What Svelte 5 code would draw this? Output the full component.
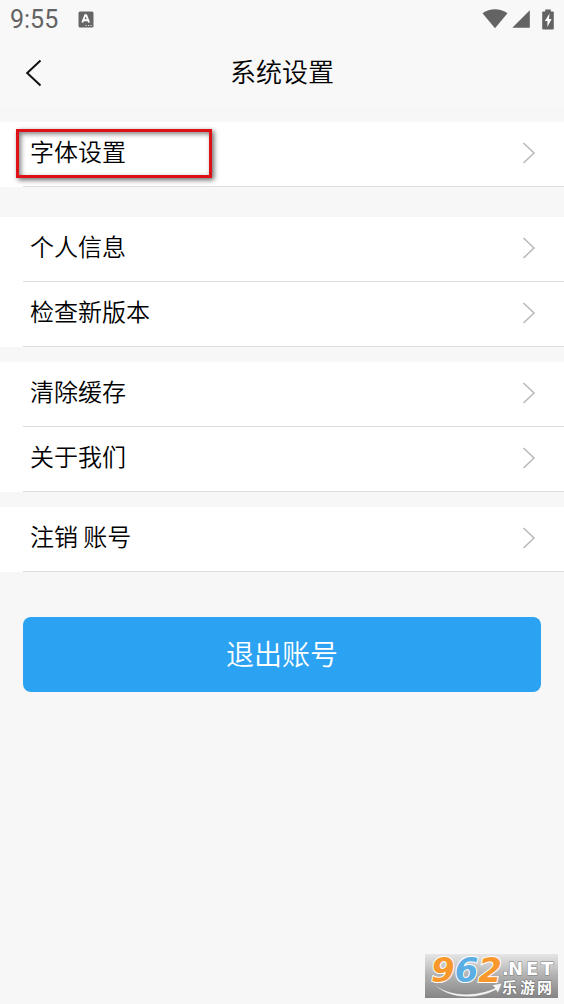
<script lang="ts">
  type Item = { label: string; highlighted?: boolean };

  const groups: Item[][] = [
    [{ label: "字体设置", highlighted: true }],
    [{ label: "个人信息" }, { label: "检查新版本" }],
    [{ label: "清除缓存" }, { label: "关于我们" }],
    [{ label: "注销 账号" }],
  ];
</script>

<div class="screen">
  <div class="status-bar">
    <span class="time">9:55</span>
    <svg class="input-icon" width="16" height="17" viewBox="0 0 16 17" aria-hidden="true">
      <rect x="0.5" y="0.5" width="15" height="16" rx="1.5" fill="#666" />
      <path d="M4.3 11.5 7.2 4.2h1l2.9 7.3M5.3 9.2h4.8" fill="none" stroke="#fff" stroke-width="1.9" />
      <path d="M7.5 14.5h1.2M10 14.5h1.2M12.5 14.5h1.2" stroke="#ddd" stroke-width="1.2" />
    </svg>
    <div class="status-icons">
      <svg width="26" height="20" viewBox="0 0 26 20" aria-hidden="true">
        <path d="M0.5 4.2C8 -1 18 -1 25.5 4.2L13 19.2Z" fill="#636363" />
      </svg>
      <svg width="18" height="18" viewBox="0 0 18 18" aria-hidden="true">
        <path d="M17.8 0.3V17.8H0.3Z" fill="#636363" />
      </svg>
      <svg class="battery" width="12" height="21" viewBox="0 0 12 21" aria-hidden="true">
        <path d="M3.2 0.5h5.6v2H11a.8.8 0 0 1 .8.8v16.4a.8.8 0 0 1-.8.8H1a.8.8 0 0 1-.8-.8V3.3a.8.8 0 0 1 .8-.8h2.2Z" fill="#636363" />
        <path d="M7.5 4.5 2.8 12h2.6v6L9.6 10H7Z" fill="#fff" />
      </svg>
    </div>
  </div>

  <header class="nav">
    <button class="back" aria-label="返回">
      <svg width="18" height="28" viewBox="0 0 18 28" aria-hidden="true">
        <path d="M15.5 1.5 2.2 14 15.5 26.5" fill="none" stroke="#111" stroke-width="2" />
      </svg>
    </button>
    <h1>系统设置</h1>
  </header>

  <main>
    {#each groups as group}
      <ul class="group">
        {#each group as item}
          <li>
            <button class="row">
              <span>{item.label}</span>
              <svg width="14" height="22" viewBox="0 0 14 22" aria-hidden="true">
                <path d="M1.5 1 12 11 1.5 21" fill="none" stroke="#b8b8b8" stroke-width="1.5" />
              </svg>
            </button>
            {#if item.highlighted}
              <div class="highlight"></div>
            {/if}
          </li>
        {/each}
      </ul>
    {/each}

    <button class="logout">退出账号</button>
  </main>

  <div class="watermark">
    <svg width="133" height="44" viewBox="0 0 133 44" role="img" aria-label="962.NET 乐游网">
      <defs>
        <linearGradient id="plate" x1="0" y1="0" x2="0" y2="1">
          <stop offset="0" stop-color="#e6e6e6" />
          <stop offset="0.5" stop-color="#b0b0b0" />
          <stop offset="1" stop-color="#858585" />
        </linearGradient>
      </defs>
      <rect width="133" height="44" fill="url(#plate)" />
      <path d="M7 31C22 46 50 46 70 37l-3-3 10-2-4 10-2-3C50 50 20 48 7 31Z" fill="#f4f4f4" stroke="#858585" stroke-width="0.5" transform="translate(0 -3)" />
      <text class="digits" x="6" y="28"><tspan fill="#f8982c">9</tspan><tspan fill="#5aaee4">6</tspan><tspan fill="#f8982c">2</tspan></text>
      <text class="net" y="21"><tspan x="77">.</tspan><tspan x="83">N</tspan><tspan x="101">E</tspan><tspan x="116">T</tspan></text>
      <text class="site" y="39"><tspan x="77">乐</tspan><tspan x="95">游</tspan><tspan x="112">网</tspan></text>
    </svg>
  </div>
</div>

<style>
  :global(body) {
    background: #f7f7f7;
  }

  .screen {
    position: relative;
    min-height: 100vh;
    background: #f7f7f7;
    color: #000;
    font-family: "Noto Sans CJK SC", sans-serif;
    font-weight: 350;
  }

  button {
    margin: 0;
    padding: 0;
    border: 0;
    background: none;
    color: inherit;
    font: inherit;
    cursor: pointer;
  }

  svg {
    display: block;
    flex: none;
    overflow: visible;
  }

  /* Status bar */
  .status-bar {
    display: flex;
    align-items: center;
    height: 38px;
    padding: 0 10px;
    background: #f8f8f8;
  }

  .time {
    padding-top: 2px;
    color: #636363;
    font-family: Roboto, sans-serif;
    font-size: 25px;
    font-weight: 400;
    line-height: 36px;
  }

  .input-icon {
    margin-left: 20px;
  }

  .status-icons {
    display: flex;
    align-items: center;
    gap: 4px;
    margin-left: auto;
  }

  .battery {
    margin-left: 8px;
  }

  /* Title bar */
  .nav {
    display: grid;
    grid-template-columns: 60px 1fr 60px;
    align-items: center;
    height: 69px;
    background: #f8f8f8;
  }

  .back {
    display: flex;
    align-items: center;
    height: 48px;
    padding-left: 25px;
  }

  h1 {
    margin: 0;
    padding-bottom: 4px;
    font-size: 26px;
    font-weight: 350;
    line-height: 40px;
    text-align: center;
  }

  /* Settings list */
  main {
    padding-top: 15px;
  }

  .group {
    margin: 0 0 15px;
    padding: 0;
    background: #fff;
    list-style: none;
  }

  .group:first-child {
    margin-bottom: 30px;
  }

  li {
    position: relative;
    padding-left: 23px;
  }

  .row {
    display: flex;
    align-items: center;
    justify-content: space-between;
    width: 100%;
    height: 65px;
    padding: 0 28px 2px 7px;
    border-bottom: 1px solid #dedede;
    font-size: 24px;
    line-height: 36px;
    text-align: left;
  }

  .row span {
    padding-bottom: 4px;
  }

  .highlight {
    position: absolute;
    top: 7px;
    left: 16px;
    box-sizing: border-box;
    width: 196px;
    height: 49px;
    border: 3px solid #de1216;
    box-shadow:
      2px 2px 5px rgba(0, 0, 0, 0.6),
      inset 2px 2px 5px rgba(0, 0, 0, 0.5);
    pointer-events: none;
  }

  .logout {
    display: block;
    width: calc(100% - 46px);
    height: 75px;
    margin: 45px 23px 0;
    padding-bottom: 4px;
    border-radius: 8px;
    background: #2ba3f2;
    color: #fff;
    font-size: 28px;
    line-height: 40px;
  }

  /* Site mark in the corner */
  .watermark {
    position: absolute;
    right: 6px;
    bottom: 6px;
  }

  .digits {
    font-family: "DejaVu Sans", sans-serif;
    font-size: 34px;
    font-style: italic;
    font-weight: 700;
    stroke: #fff;
    stroke-width: 2px;
    paint-order: stroke;
  }

  .net {
    fill: #fff;
    font-family: "DejaVu Sans", sans-serif;
    font-size: 18px;
    font-weight: 700;
    stroke: #7c7c7c;
    stroke-width: 1px;
    paint-order: stroke;
  }

  .site {
    fill: #fff;
    font-family: "Noto Sans CJK SC", sans-serif;
    font-size: 15px;
    font-weight: 700;
    stroke: #6c6c6c;
    stroke-width: 1px;
    paint-order: stroke;
  }
</style>
